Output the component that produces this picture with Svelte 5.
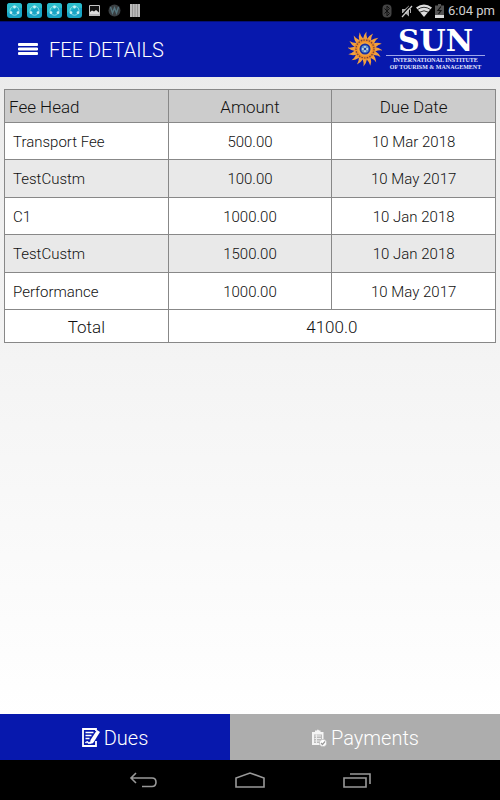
<script>
  const fees = [
    { head: 'Transport Fee', amount: '500.00', due: '10 Mar 2018' },
    { head: 'TestCustm', amount: '100.00', due: '10 May 2017' },
    { head: 'C1', amount: '1000.00', due: '10 Jan 2018' },
    { head: 'TestCustm', amount: '1500.00', due: '10 Jan 2018' },
    { head: 'Performance', amount: '1000.00', due: '10 May 2017' }
  ];
  const total = '4100.0';
  let tab = $state('dues');
  const rays = Array.from({ length: 16 }, (_, i) => i * 22.5);
</script>

<div class="screen">
  <div class="status">
    <div class="notifications">
      {#each [1, 2, 3, 4] as n (n)}
        <svg width="15" height="15" viewBox="0 0 15 15" aria-hidden="true">
          <rect width="15" height="15" rx="3" fill="#18a5c6" />
          <path d="M0 3a3 3 0 0 1 3-3h9a3 3 0 0 1 3 3v2Q8 4 0 10z" fill="#2bbccb" />
          <circle cx="7.5" cy="7.7" r="4.5" fill="none" stroke="#8cd9e6" stroke-width="1" />
          <circle cx="7.5" cy="4" r="1.400" fill="#c5eef2" />
          <circle cx="4" cy="9.7" r="1.400" fill="#c5eef2" />
          <circle cx="11" cy="9.7" r="1.400" fill="#c5eef2" />
        </svg>
      {/each}
      <svg class="small" width="11" height="11" viewBox="0 0 11 11" aria-hidden="true">
        <path d="M.5.5h10v10H.5z" fill="#111" stroke="#c4c4c4" />
        <path d="M1 9V7l2-1.500 2 1 2-1.500 3 2.500V9z" fill="#ddd" />
        <path d="M0 9h11v2H0z" fill="#bbb" />
      </svg>
      <svg width="13" height="13" viewBox="0 0 13 13" aria-hidden="true">
        <circle cx="6.500" cy="6.500" r="6" fill="#3a3f42" />
        <path d="M2.500 3l2 6 2-5 2 5 2-6" fill="none" stroke="#55757f" stroke-width="1.400" />
      </svg>
      <svg width="11" height="13" viewBox="0 0 11 13" aria-hidden="true">
        <path d="M0 0h10v13H0z" fill="#bbb" />
        <path d="M2.500 0v13M5 0v13M7.500 0v13" stroke="#777" stroke-width=".6" />
      </svg>
    </div>
    <div class="system">
      <svg class="bt" width="10" height="14" viewBox="0 0 10 14" aria-hidden="true">
        <rect x=".5" y=".5" width="9" height="13" rx="4" fill="#444" />
        <path d="M2.500 4.500l5 5L5 12V2l2.500 2.500-5 5" fill="none" stroke="#111" />
      </svg>
      <svg width="12" height="14" viewBox="0 0 12 14" aria-hidden="true">
        <path d="M1 5h3l4-3.500v11L4 9H1z" fill="#aaa" />
        <path d="M9.500 5v4" stroke="#aaa" />
        <path d="M0 12L10 1" stroke="#000" stroke-width="1.200" />
        <path d="M1 13L11 2" stroke="#ccc" stroke-width="1.200" />
      </svg>
      <svg width="16" height="13" viewBox="0 0 16 13" aria-hidden="true">
        <path d="M0 3.500Q8-2.500 16 3.500L8 13z" fill="#ddd" />
        <path d="M1.500 5.500q6.500-4.500 13 0M3.700 8.200q4.300-2.800 8.600 0" fill="none" stroke="#000" stroke-width=".8" />
      </svg>
      <svg width="9" height="14" viewBox="0 0 9 14" aria-hidden="true">
        <path d="M3 0h3v1.500h3V14H0V1.500h3z" fill="#555" />
        <path d="M0 11h9v3H0z" fill="#ddd" />
        <path d="M6 2.500L3 6.500h3L3.500 10" fill="none" stroke="#111" stroke-width="1.200" />
      </svg>
      <span>6:04 pm</span>
    </div>
  </div>

  <header>
    <button class="menu" aria-label="Menu">
      <svg width="20" height="12" viewBox="0 0 20 12" aria-hidden="true">
        <path d="M1 1.500h18M1 6h18M1 10.500h18" stroke="#fff" stroke-width="2.800" stroke-linecap="round" />
      </svg>
    </button>
    <h1>FEE DETAILS</h1>
    <div class="brand">
      <svg width="34" height="36" viewBox="-17 -18 34 36" aria-hidden="true">
        {#each rays as angle (angle)}
          <path d="M-2-10Q-1.500-14 1.500-17.500Q.8-14 2.400-10z" fill="#f0a040" transform="rotate({angle})" />
        {/each}
        <circle r="10.500" fill="#ef8f27" />
        <circle r="9" fill="none" stroke="#713d45" stroke-width="1.200" stroke-dasharray="1.500 1.200" />
        <circle r="7" fill="#f5a33d" />
        <circle r="5.500" fill="#1730a5" />
        <circle r="3.800" fill="#5d91ca" />
        <path d="M-3 0H3M0-3V3" stroke="#d5e5e8" stroke-width="1.300" />
        <circle r="1.300" fill="#243d9d" />
      </svg>
      <div class="wordmark">
        <strong>SUN</strong>
        <span>INTERNATIONAL INSTITUTE</span>
        <span>OF TOURISM &amp; MANAGEMENT</span>
      </div>
    </div>
  </header>

  <main>
    <table>
      <thead>
        <tr><th scope="col">Fee Head</th><th scope="col">Amount</th><th scope="col">Due Date</th></tr>
      </thead>
      <tbody>
        {#each fees as fee, i (i)}
          <tr><td>{fee.head}</td><td>{fee.amount}</td><td>{fee.due}</td></tr>
        {/each}
      </tbody>
      <tfoot>
        <tr><th scope="row">Total</th><td colspan="2">{total}</td></tr>
      </tfoot>
    </table>
  </main>

  <div class="tabs">
    <button class="dues" class:active={tab === 'dues'} aria-pressed={tab === 'dues'} onclick={() => (tab = 'dues')}>
      <svg width="18" height="19" viewBox="0 0 18 19" aria-hidden="true">
        <path d="M14 3V1H1v17h13v-5" fill="none" stroke="#fff" stroke-width="1.800" />
        <path d="M3.500 4.500h8M3.500 7.500h6M3.500 10.500h4M3.500 15q1.500-2 2.500-.5t2 0h3" fill="none" stroke="#fff" stroke-width="1.500" />
        <path d="M15 2l3 2-6.500 10.500-3.500 1.500.5-4z" fill="#fff" />
      </svg>
      Dues
    </button>
    <button class="payments" class:active={tab === 'payments'} aria-pressed={tab === 'payments'} onclick={() => (tab = 'payments')}>
      <svg width="16" height="18" viewBox="0 0 16 18" aria-hidden="true">
        <path d="M1 3h3V1.500h2Q6.500-.5 8 1.500h1.500V3h3v13H1z" fill="#f5f5f5" />
        <path d="M3 5.500H11v8.500H3z" fill="#bbb" />
        <path d="M3.500 7H10M3.500 9.500H10M3.500 12H10M5.500 5.500v9" stroke="#eee" />
        <circle cx="12" cy="14" r="3.700" fill="#fff" stroke="#aaa" stroke-width=".6" />
        <path d="M10 14l1.500 1.500 2.500-3" fill="none" stroke="#999" stroke-width="1.200" />
      </svg>
      Payments
    </button>
  </div>

  <nav>
    <button aria-label="Back">
      <svg width="28" height="16" viewBox="0 0 28 16" aria-hidden="true">
        <path d="M7 1L2 6l5 5M2 6h21q4 0 4 4.200T23 14.500H13" />
      </svg>
    </button>
    <button aria-label="Home">
      <svg width="30" height="16" viewBox="0 0 30 16" aria-hidden="true">
        <path d="M1 15V6L15 1l14 5v9z" />
      </svg>
    </button>
    <button aria-label="Recent apps">
      <svg width="28" height="16" viewBox="0 0 28 16" aria-hidden="true">
        <path d="M1 6h22v9H1zM7 2h20v10" />
      </svg>
    </button>
  </nav>
</div>

<style>
  :global(body) {
    margin: 0;
  }
  .screen {
    min-height: 100vh;
    display: flex;
    flex-direction: column;
    font-family: Roboto, sans-serif;
    font-weight: 300;
    background: linear-gradient(#e9e9e9, #fff 90%);
  }
  button {
    border: 0;
    padding: 0;
    background: none;
    font: inherit;
    color: inherit;
    cursor: pointer;
  }
  svg {
    display: block;
    flex: none;
  }
  .status {
    height: 21px;
    box-sizing: border-box;
    padding: 0 5px 0 7px;
    background: #000;
    display: flex;
    align-items: center;
    justify-content: space-between;
  }
  .notifications {
    display: flex;
    align-items: center;
    gap: 5px;
  }
  .notifications .small {
    margin: 0 3px 0 2px;
  }
  .notifications svg:last-child {
    margin-left: 4px;
  }
  .system {
    display: flex;
    align-items: center;
    gap: 4px;
    color: #d0d0d0;
    font-size: 13px;
    font-weight: 400;
  }
  .system .bt {
    margin-right: 6px;
  }
  .system svg {
    margin-left: -1px;
  }
  header {
    height: 56px;
    box-sizing: border-box;
    padding: 0 15px 0 18px;
    background: #0718ad;
    border-top: 1px solid #050f77;
    color: #fff;
    display: flex;
    align-items: center;
  }
  .menu {
    padding-bottom: 2px;
  }
  h1 {
    flex: 1;
    margin: 0 0 0 11px;
    font-size: 20px;
    line-height: 24px;
    font-weight: 300;
  }
  .brand {
    display: flex;
    align-items: center;
    gap: 4px;
    padding-bottom: 2px;
  }
  .wordmark {
    min-width: 99px;
    display: flex;
    flex-direction: column;
    align-items: center;
    font-family: "Liberation Serif", serif;
    font-weight: 700;
    font-size: 6px;
    line-height: 7px;
    color: #e4e7ff;
  }
  .wordmark strong {
    align-self: stretch;
    margin-bottom: 1px;
    border-bottom: 1px solid #9ca5e8;
    font-family: "DejaVu Serif", serif;
    font-size: 30px;
    line-height: 28px;
    text-align: center;
    color: #fff;
  }
  main {
    flex: 1;
    padding: 12px 4px;
  }
  table {
    width: 100%;
    table-layout: fixed;
    border-collapse: collapse;
    background: #fff;
    color: #111;
    text-align: center;
    font-size: 15px;
  }
  th,
  td {
    height: 37px;
    box-sizing: border-box;
    padding: 1px 0 0;
    border: 1px solid #888;
    font-weight: 300;
  }
  thead th,
  tfoot th,
  tfoot td {
    height: 33px;
    font-size: 17px;
  }
  thead th {
    background: #ccc;
  }
  thead th:first-child {
    padding-left: 4px;
    text-align: left;
  }
  tbody td:first-child {
    padding-left: 8px;
    text-align: left;
  }
  tbody tr:nth-child(even) td {
    height: 38px;
    background: #e9e9e9;
  }
  .tabs {
    height: 46px;
    display: flex;
    color: #fff;
    font-size: 20px;
  }
  .tabs button {
    display: flex;
    align-items: center;
    justify-content: center;
    gap: 4px;
    padding-top: 1px;
    background: #adadad;
  }
  .tabs .dues {
    flex: 46;
  }
  .tabs .payments {
    flex: 54;
  }
  .tabs .active {
    background: #0718ad;
  }
  nav {
    height: 40px;
    background: #000;
    display: flex;
    align-items: center;
    justify-content: center;
    gap: 78px;
  }
  nav path {
    fill: none;
    stroke: #999;
    stroke-width: 1.600;
  }
</style>
